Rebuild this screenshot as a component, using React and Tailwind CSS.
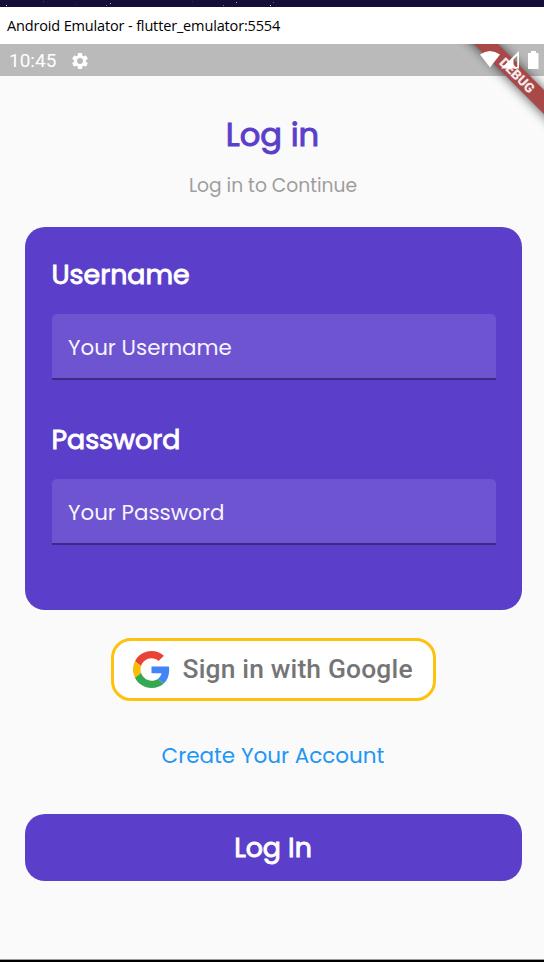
const poppins = "font-['Poppins','Inter',sans-serif] whitespace-nowrap";

const stars = [
  [6, 5, '#d8d4ea'], [43, 1, '#4b4172'], [75, 4, '#3a2f60'], [106, 5, '#6c6290'], [110, 3, '#b4add0'], [192, 1, '#3a2f60'], [223, 5, '#8078a4'], [236, 2, '#b4add0'], [270, 5, '#d8d4ea'], [273, 2, '#6c6290'],
];

function Field({ label, hint, className }) {
  return (
    <div className={className}>
      <div className={`${poppins} h-[40px] text-[26.8px] leading-[40px] text-white [-webkit-text-stroke:0.9px_white]`}>{label}</div>
      <div className="mt-[19px] flex h-[66px] items-center rounded-t-[5px] border-b-2 border-[#3c2a85] bg-[#6e54d1] pt-[5px] pl-[16.5px]">
        <span className={`${poppins} text-[21.4px] text-[#f6f4fd]`}>{hint}</span>
      </div>
    </div>
  );
}

function GoogleLogo() {
  return (
    <svg className="h-[37px] w-[37px]" viewBox="0 0 48 48">
      <path fill="#EA4335" d="M24 9.5c3.54 0 6.71 1.22 9.21 3.6l6.85-6.85C35.9 2.38 30.47 0 24 0 14.62 0 6.51 5.38 2.56 13.22l7.98 6.19C12.43 13.72 17.74 9.5 24 9.5z" />
      <path fill="#4285F4" d="M46.98 24.55c0-1.57-.15-3.09-.38-4.55H24v9.02h12.94c-.58 2.96-2.26 5.48-4.78 7.18l7.73 6c4.51-4.18 7.09-10.36 7.09-17.65z" />
      <path fill="#FBBC05" d="M10.53 28.59c-.48-1.45-.76-2.99-.76-4.59s.27-3.14.76-4.59l-7.98-6.19C.92 16.46 0 20.12 0 24c0 3.88.92 7.54 2.56 10.78l7.97-6.19z" />
      <path fill="#34A853" d="M24 48c6.48 0 11.93-2.13 15.89-5.81l-7.73-6c-2.15 1.45-4.92 2.3-8.16 2.3-6.26 0-11.57-4.22-13.47-9.91l-7.98 6.19C6.51 42.62 14.62 48 24 48z" />
    </svg>
  );
}

export default function App() {
  return (
    <div className="relative flex h-[962px] w-[544px] flex-col overflow-hidden bg-[#fafafa]">
      <svg className="h-[7px] w-full shrink-0 bg-[#160d38]" viewBox="0 0 544 7">
        {stars.map(([x, y, fill]) => (
          <rect key={x} x={x} y={y} width="1" height="1" fill={fill} />
        ))}
      </svg>
      <div className="flex h-[37px] shrink-0 items-center bg-white pl-[7px]">
        <span className="font-['Segoe_UI','Open_Sans',sans-serif] text-[14.5px] tracking-[-0.15px] whitespace-nowrap text-black">Android Emulator - flutter_emulator:5554</span>
      </div>
      <div className="flex h-[32px] shrink-0 items-center bg-[#bababa] pt-[2px] pl-[9px]">
        <span className="font-[Roboto,sans-serif] text-[19px] text-white">10:45</span>
        <svg className="ml-[14px] h-[20px] w-[20px]" viewBox="0 0 24 24" fill="white">
          <path d="M19.14 12.94c.04-.3.06-.61.06-.94s-.02-.64-.07-.94l2.03-1.58a.49.49 0 0 0 .12-.61l-1.92-3.32a.49.49 0 0 0-.59-.22l-2.39.96c-.5-.38-1.03-.7-1.62-.94l-.36-2.54a.48.48 0 0 0-.48-.41h-3.84c-.24 0-.43.17-.47.41l-.36 2.54c-.59.24-1.13.57-1.62.94l-2.39-.96a.48.48 0 0 0-.59.22L2.74 8.87c-.12.21-.08.47.12.61l2.03 1.58c-.05.3-.09.63-.09.94s.02.64.07.94l-2.03 1.58a.49.49 0 0 0-.12.61l1.92 3.32c.12.22.37.29.59.22l2.39-.96c.5.38 1.03.7 1.62.94l.36 2.54c.05.24.24.41.48.41h3.84c.24 0 .44-.17.47-.41l.36-2.54c.59-.24 1.13-.56 1.62-.94l2.39.96c.22.08.47 0 .59-.22l1.92-3.32a.48.48 0 0 0-.12-.61zM12 15.6a3.6 3.6 0 1 1 0-7.2 3.6 3.6 0 0 1 0 7.2z" />
        </svg>
      </div>

      <div className="flex flex-col items-center pt-[34px] pr-[22px] pl-[25px]">
        <div className={`${poppins} mr-[2px] h-[50px] text-[32.2px] leading-[50px] text-[#5b3fca] [-webkit-text-stroke:1px_#5b3fca]`}>Log in</div>
        <div className={`${poppins} mt-[11px] mr-[1px] h-[30px] text-[18.7px] leading-[30px] text-[#9e9e9e]`}>Log in to Continue</div>
        <div className="mt-[26px] h-[383px] w-[497px] rounded-[20px] bg-[#5b3fca] px-[26.5px] pt-[28px]">
          <Field label="Username" hint="Your Username" />
          <Field className="mt-[40px]" label="Password" hint="Your Password" />
        </div>
        <div className="mt-[28px] mr-[1px] flex h-[63px] w-[325px] items-center rounded-[20px] border-[3px] border-[#fec10d] bg-white pl-[19px]">
          <GoogleLogo />
          <span className="ml-[13px] pt-[1px] font-[Roboto,sans-serif] text-[26.4px] font-medium tracking-[0.17px] whitespace-nowrap text-[#757575]">Sign in with Google</span>
        </div>
        <div className={`${poppins} mt-[39px] mr-[1px] h-[32px] text-[21.5px] leading-[32px] text-[#2196f3]`}>Create Your Account</div>
        <div className="mt-[42px] flex h-[67px] w-[497px] items-center justify-center rounded-[20px] bg-[#5b3fca] pt-[2px]">
          <span className={`${poppins} mr-[1px] text-[26.8px] text-white [-webkit-text-stroke:0.9px_white]`}>Log In</span>
        </div>
      </div>
      <div className="mt-auto h-[3px] shrink-0 border-t border-[#9a9a9a] bg-black" />

      <svg className="absolute top-[44px] right-0 h-[100px] w-[104px]" viewBox="440 44 104 100">
        <defs>
          <filter id="soft" x="-30%" y="-30%" width="160%" height="160%">
            <feGaussianBlur stdDeviation="6" />
          </filter>
        </defs>
        <path d="M450 20 L473 20 L580 127 L580 150 Z" fill="#000" opacity="0.7" filter="url(#soft)" />
        <path d="M474 44 L498 44 L544 90 L544 114 Z" fill="#a94849" />
        <text x="517" y="80" transform="rotate(45 517 75.500)" textAnchor="middle" className="font-[Roboto,sans-serif] text-[13.5px] font-black" fill="#f4eaea">DEBUG</text>
        <path d="M480 54.5 Q490 47.5 500 54.5 L490 67.5 Z" fill="white" />
        <path d="M501 68.500 L519 51 L519 68.500 Z M513.500 67 H517.300 V55.500 L513.500 59.200 Z" fill="white" fillRule="evenodd" />
        <path d="M528 53 h3 v-2 h5 v2 h2.500 v16 h-10.500 z" fill="white" />
      </svg>
    </div>
  );
}
